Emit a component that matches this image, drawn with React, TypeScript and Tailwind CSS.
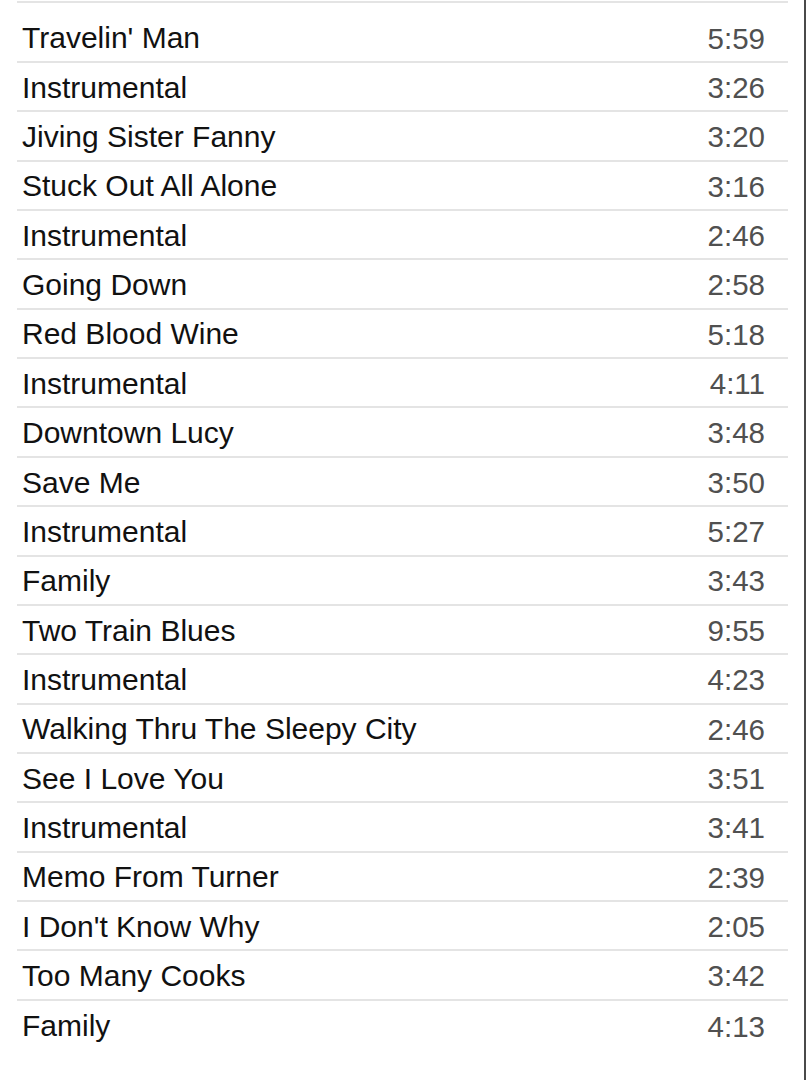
import React from "react";

const tracks: [string, string][] = [
  ["Travelin' Man", "5:59"],
  ["Instrumental", "3:26"],
  ["Jiving Sister Fanny", "3:20"],
  ["Stuck Out All Alone", "3:16"],
  ["Instrumental", "2:46"],
  ["Going Down", "2:58"],
  ["Red Blood Wine", "5:18"],
  ["Instrumental", "4:11"],
  ["Downtown Lucy", "3:48"],
  ["Save Me", "3:50"],
  ["Instrumental", "5:27"],
  ["Family", "3:43"],
  ["Two Train Blues", "9:55"],
  ["Instrumental", "4:23"],
  ["Walking Thru The Sleepy City", "2:46"],
  ["See I Love You", "3:51"],
  ["Instrumental", "3:41"],
  ["Memo From Turner", "2:39"],
  ["I Don't Know Why", "2:05"],
  ["Too Many Cooks", "3:42"],
  ["Family", "4:13"],
];

export default function App() {
  return (
    <div
      className="w-[806px] h-[1080px] bg-white border-r-2 border-[#4a4a4a] overflow-hidden"
      style={{ fontFamily: '"Liberation Sans", Arial, sans-serif' }}
    >
      <div className="mt-px ml-[17px] mr-[16px] h-[2px] bg-[#e4e4e4]" />
      <div className="mt-[10.6px] ml-[17px] mr-[16px] flex flex-col">
        {tracks.map(([title, time], i) => (
          <div
            key={i}
            className={`h-[49.37px] flex items-center justify-between pl-[5px] pr-[23px] pt-[2px] ${
              i < tracks.length - 1 ? "border-b-2 border-[#e4e4e4]" : ""
            }`}
          >
            <span className="text-[30px] leading-none text-[#111111]">{title}</span>
            <span className="text-[29.5px] leading-none text-[#505050]">{time}</span>
          </div>
        ))}
      </div>
    </div>
  );
}
